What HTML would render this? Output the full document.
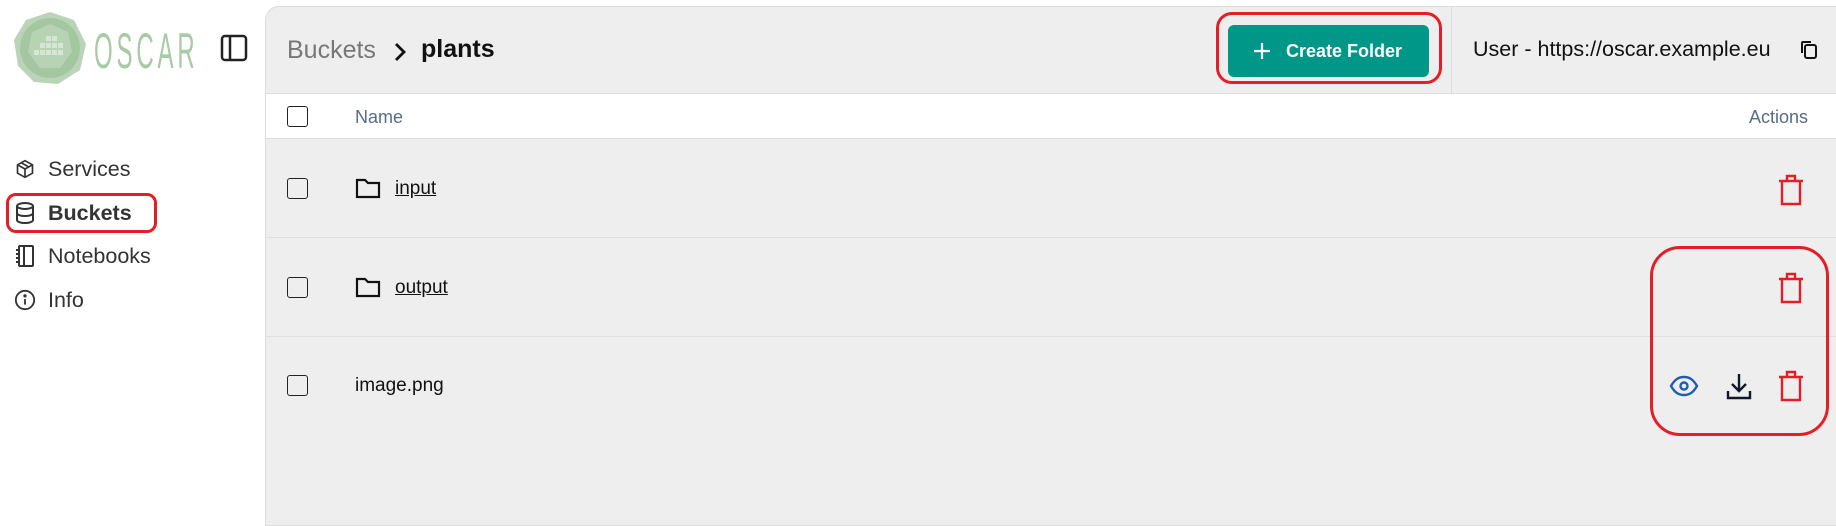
<!DOCTYPE html>
<html><head><meta charset="utf-8"><style>
*{margin:0;padding:0;box-sizing:border-box}
body{width:1836px;height:466px;background:#fff;font-family:"Liberation Sans",sans-serif;position:relative;overflow:hidden;color:#111}
.a{position:absolute}
.panel{left:265px;top:6px;width:1600px;height:520px;background:#eee;border:1px solid #ddd;border-radius:14px 0 0 0}
.nav{font-size:21.5px;color:#333;left:48px}
.cb{width:21px;height:21px;border:1.5px solid #222;border-radius:3px;background:transparent}
.txt{font-size:19px;color:#111}
</style></head><body>
<!-- logo -->
<svg class="a" style="left:12px;top:10px" width="76" height="76" viewBox="0 0 76 76">
<polygon points="38,2 62,10 74,34 68,60 46,74 22,72 6,56 2,30 14,10" fill="#a9c9a6" opacity=".8"/>
<circle cx="38" cy="38" r="30" fill="#9fc29b" opacity=".8"/>
<polygon points="38,14 56,22 60,42 48,58 28,58 16,42 20,22" fill="#b7d3b4"/>
<g fill="#d6e6d4"><rect x="34" y="26" width="5" height="5"/><rect x="40" y="26" width="5" height="5"/><rect x="28" y="33" width="5" height="5"/><rect x="34" y="33" width="5" height="5"/><rect x="40" y="33" width="5" height="5"/><rect x="46" y="33" width="5" height="5"/><rect x="22" y="40" width="5" height="5"/><rect x="28" y="40" width="5" height="5"/><rect x="34" y="40" width="5" height="5"/><rect x="40" y="40" width="5" height="5"/><rect x="46" y="40" width="5" height="5"/></g>
</svg>
<div class="a" style="left:94px;top:22px;font-size:50px;color:#a8cba5;letter-spacing:8px;transform:scaleX(.48);transform-origin:left">OSCAR</div>
<svg class="a" style="left:220px;top:34px" width="28" height="28" viewBox="0 0 28 28"><rect x="2" y="2" width="24" height="24" rx="3" fill="none" stroke="#222" stroke-width="2.5"/><line x1="10" y1="2" x2="10" y2="26" stroke="#222" stroke-width="2.5"/></svg>
<!-- nav -->
<svg class="a" style="left:15px;top:159px" width="20" height="20" viewBox="0 0 24 24" fill="none" stroke="#333" stroke-width="2"><path d="M12 2l9 5v10l-9 5-9-5V7z M3 7l9 5 9-5 M12 12v10 M7.5 4.5l9 5"/></svg>
<div class="a nav" style="top:157px">Services</div>
<svg class="a" style="left:15px;top:202px" width="20" height="22" viewBox="0 0 20 22" fill="none" stroke="#333" stroke-width="2"><ellipse cx="10" cy="4" rx="8" ry="3"/><path d="M2 4v14c0 1.7 3.6 3 8 3s8-1.3 8-3V4 M2 11c0 1.7 3.6 3 8 3s8-1.3 8-3"/></svg>
<div class="a nav" style="top:201px;font-weight:bold">Buckets</div>
<div class="a" style="left:6px;top:193px;width:151px;height:40px;border:3px solid #e41e26;border-radius:10px"></div>
<svg class="a" style="left:15px;top:244px" width="20" height="24" viewBox="0 0 20 24" fill="none" stroke="#333" stroke-width="2"><rect x="4" y="2" width="14" height="20" rx="1"/><line x1="9" y1="2" x2="9" y2="22"/><path d="M1 6h4M1 10h4M1 14h4M1 18h4"/></svg>
<div class="a nav" style="top:244px">Notebooks</div>
<svg class="a" style="left:14px;top:289px" width="22" height="22" viewBox="0 0 24 24" fill="none" stroke="#333" stroke-width="2"><circle cx="12" cy="12" r="10"/><line x1="12" y1="11" x2="12" y2="17"/><circle cx="12" cy="7.5" r=".8" fill="#333"/></svg>
<div class="a nav" style="top:288px">Info</div>
<!-- panel -->
<div class="a panel"></div>
<div class="a" style="left:266px;top:93px;width:1570px;height:46px;background:#fff;border-top:1px solid #ddd;border-bottom:1px solid #ddd"></div>
<div class="a" style="left:266px;top:237px;width:1570px;height:1px;background:#e0e0e0"></div>
<div class="a" style="left:266px;top:336px;width:1570px;height:1px;background:#e0e0e0"></div>
<div class="a" style="left:1451px;top:7px;width:1px;height:86px;background:#ddd"></div>
<div class="a" style="left:287px;top:36px;font-size:25px;color:#777">Buckets</div>
<svg class="a" style="left:392px;top:41px" width="16" height="22" viewBox="0 0 16 22"><path d="M4 3l8 8-8 8" fill="none" stroke="#111" stroke-width="2.8"/></svg>
<div class="a" style="left:421px;top:35px;font-size:25px;font-weight:bold">plants</div>
<div class="a" style="left:1228px;top:25px;width:201px;height:52px;background:#009688;border-radius:6px;color:#fff;font-size:18px;font-weight:bold;line-height:52px;padding-left:58px">Create Folder</div>
<svg class="a" style="left:1252px;top:41px" width="20" height="20" viewBox="0 0 20 20"><path d="M10 2v16M2 10h16" stroke="#fff" stroke-width="2.2"/></svg>
<div class="a" style="left:1216px;top:12px;width:226px;height:72px;border:3px solid #e41e26;border-radius:16px"></div>
<div class="a" style="left:1473px;top:37px;font-size:21.5px">User - https://oscar.example.eu</div>
<svg class="a" style="left:1800px;top:40px" width="18" height="20" viewBox="0 0 18 20" fill="none" stroke="#111" stroke-width="2"><rect x="5" y="5" width="11" height="13" rx="2"/><path d="M2 13V3a1 1 0 0 1 1-1h8"/></svg>
<!-- table -->
<div class="a cb" style="left:287px;top:106px"></div>
<div class="a" style="left:355px;top:107px;font-size:18px;color:#5a6b85">Name</div>
<div class="a" style="left:1730px;top:107px;font-size:18px;color:#5a6b85;width:78px;text-align:right">Actions</div>
<div class="a cb" style="left:287px;top:178px"></div>
<div class="a cb" style="left:287px;top:277px"></div>
<div class="a cb" style="left:287px;top:375px"></div>
<svg class="a" style="left:355px;top:177px" width="26" height="22" viewBox="0 0 26 22" fill="none" stroke="#111" stroke-width="2.2"><path d="M2 3h8l3 3h11v14H2z"/></svg>
<svg class="a" style="left:355px;top:276px" width="26" height="22" viewBox="0 0 26 22" fill="none" stroke="#111" stroke-width="2.2"><path d="M2 3h8l3 3h11v14H2z"/></svg>
<div class="a txt" style="left:395px;top:178px;text-decoration:underline">input</div>
<div class="a txt" style="left:395px;top:277px;text-decoration:underline">output</div>
<div class="a txt" style="left:355px;top:375px">image.png</div>
<svg class="a" style="left:1777px;top:174px" width="28" height="32" viewBox="0 0 28 32" fill="none" stroke="#e41e26" stroke-width="2.4"><path d="M2 7h24M10 7V2h8v5M5 7v23h18V7"/></svg>
<svg class="a" style="left:1777px;top:272px" width="28" height="32" viewBox="0 0 28 32" fill="none" stroke="#e41e26" stroke-width="2.4"><path d="M2 7h24M10 7V2h8v5M5 7v23h18V7"/></svg>
<svg class="a" style="left:1777px;top:370px" width="28" height="32" viewBox="0 0 28 32" fill="none" stroke="#e41e26" stroke-width="2.4"><path d="M2 7h24M10 7V2h8v5M5 7v23h18V7"/></svg>
<svg class="a" style="left:1669px;top:375px" width="30" height="22" viewBox="0 0 30 22" fill="none" stroke="#1f5fae" stroke-width="2.4"><path d="M2 11C6 4 10 2 15 2s9 2 13 9c-4 7-8 9-13 9S6 18 2 11z"/><circle cx="15" cy="11" r="3.5"/></svg>
<svg class="a" style="left:1725px;top:372px" width="28" height="28" viewBox="0 0 28 28" fill="none" stroke="#111827" stroke-width="2.4"><path d="M14 2v16M7 12l7 7 7-7M3 19v7h22v-7"/></svg>
<div class="a" style="left:1650px;top:246px;width:179px;height:190px;border:3px solid #e41e26;border-radius:30px"></div>
</body></html>
